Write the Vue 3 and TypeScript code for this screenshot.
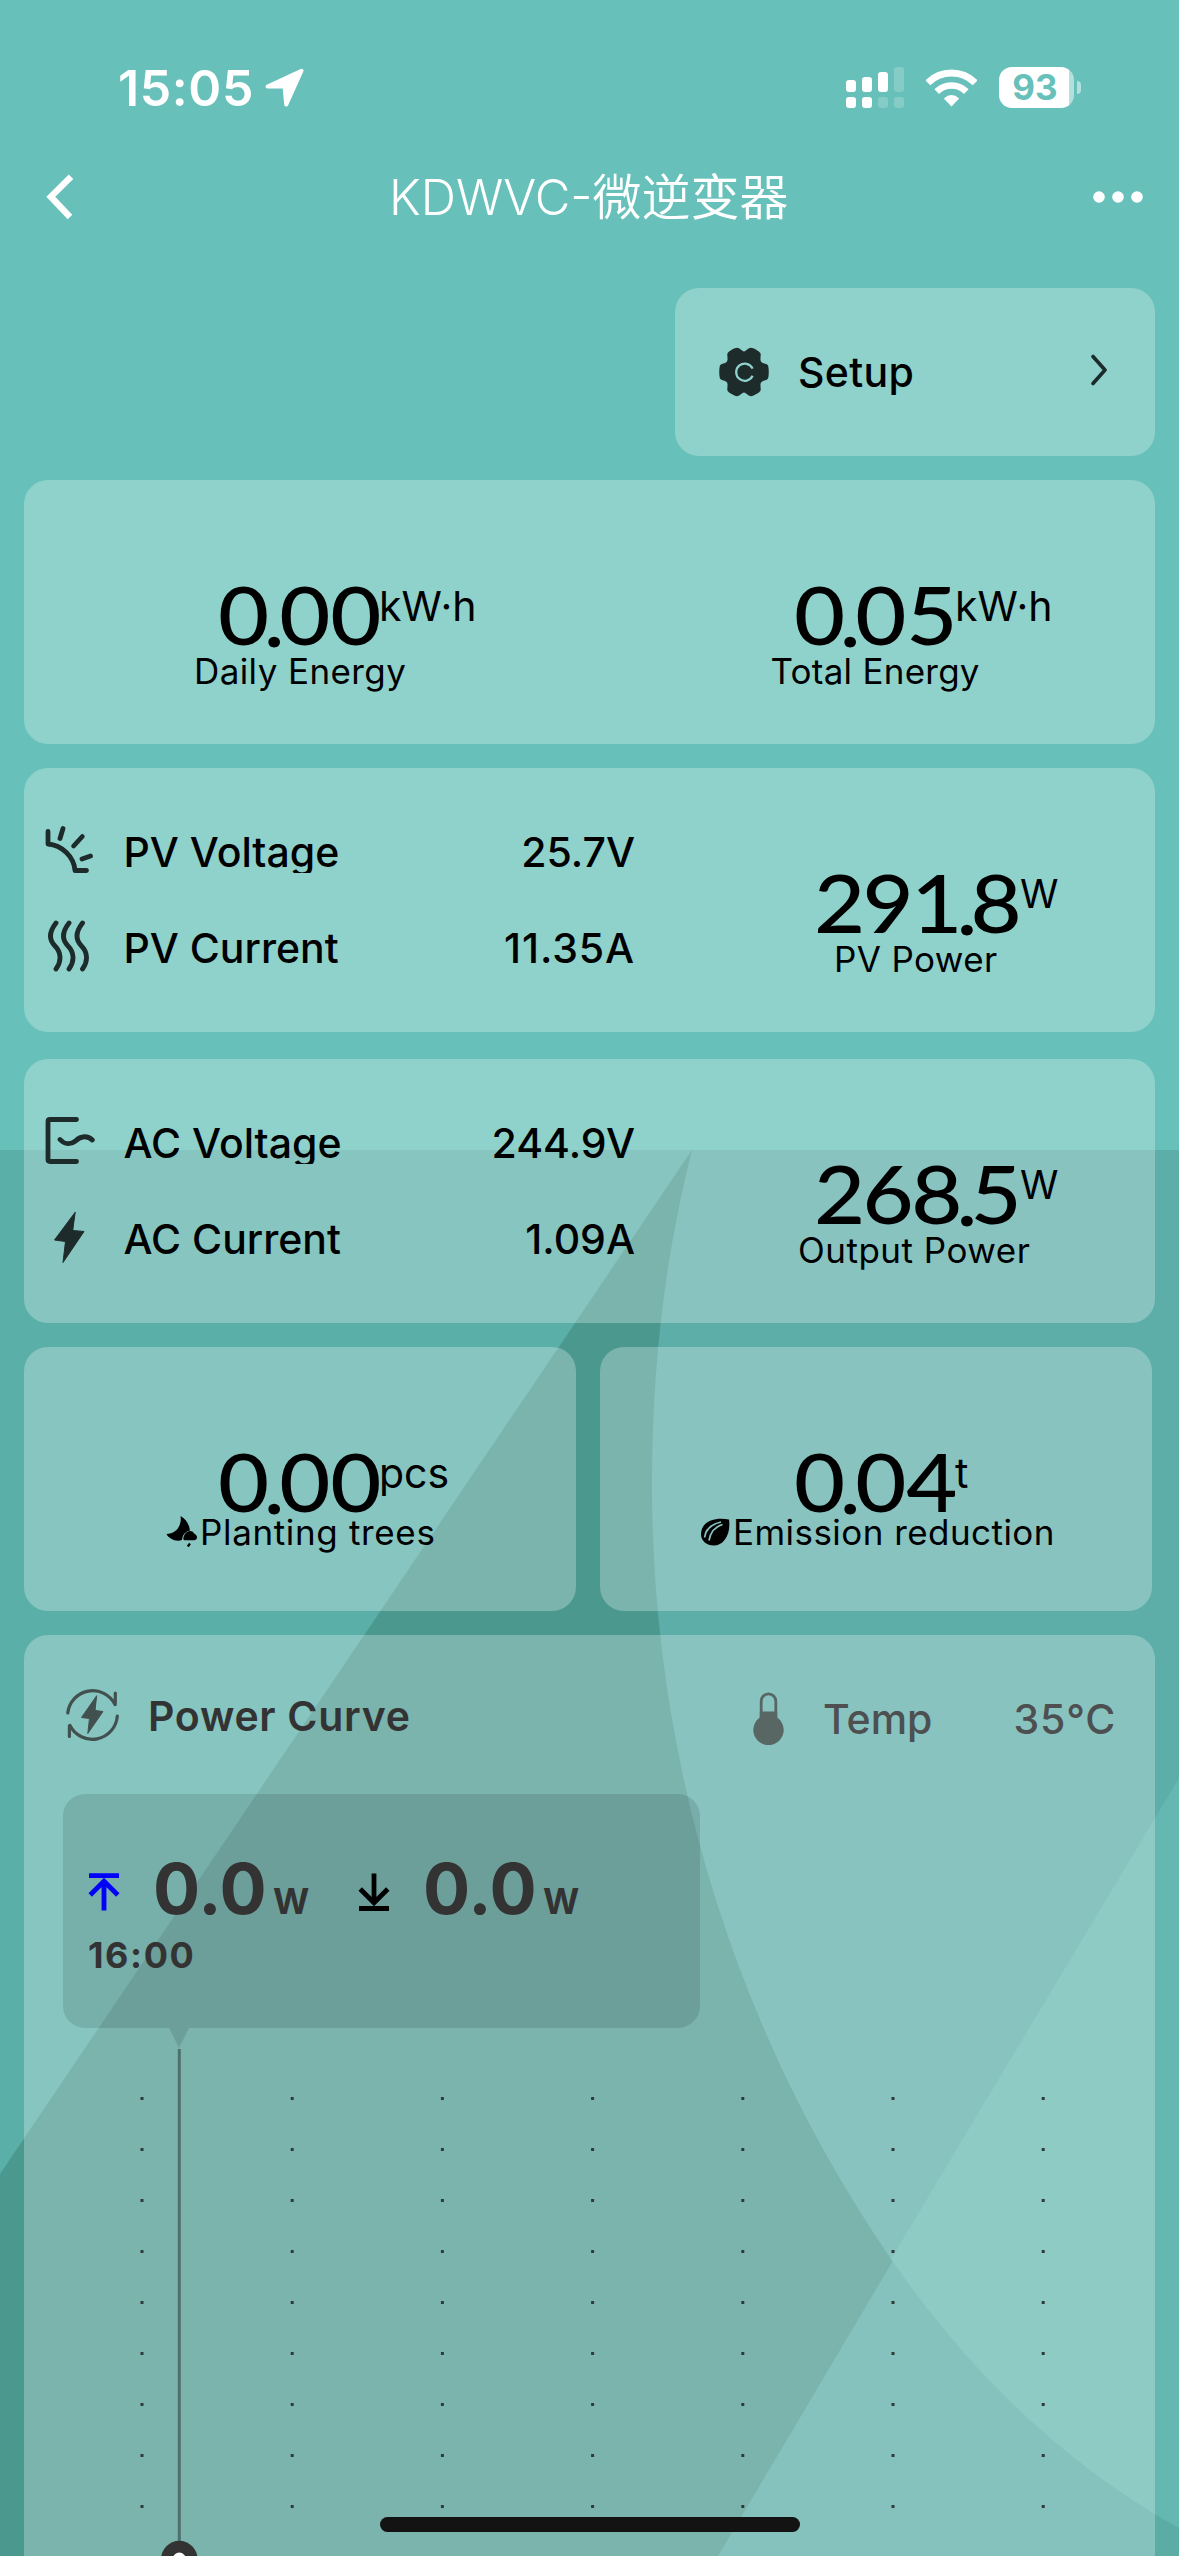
<script setup lang="ts">
interface Metric {
  id: string
  whole: string
  fraction: string
  unit: string
  label: string
}

interface Reading {
  icon: 'solar' | 'waves' | 'outlet' | 'bolt'
  label: string
  value: string
}

interface Channel {
  id: string
  readings: Reading[]
  power: Metric
}

const energy: Metric[] = [
  { id: 'daily', whole: '0', fraction: '00', unit: 'kW·h', label: 'Daily Energy' },
  { id: 'total', whole: '0', fraction: '05', unit: 'kW·h', label: 'Total Energy' },
]

const channels: Channel[] = [
  {
    id: 'pv',
    readings: [
      { icon: 'solar', label: 'PV Voltage', value: '25.7V' },
      { icon: 'waves', label: 'PV Current', value: '11.35A' },
    ],
    power: { id: 'pv-power', whole: '291', fraction: '8', unit: 'W', label: 'PV Power' },
  },
  {
    id: 'ac',
    readings: [
      { icon: 'outlet', label: 'AC Voltage', value: '244.9V' },
      { icon: 'bolt', label: 'AC Current', value: '1.09A' },
    ],
    power: { id: 'ac-power', whole: '268', fraction: '5', unit: 'W', label: 'Output Power' },
  },
]

const savings: Metric[] = [
  { id: 'trees', whole: '0', fraction: '00', unit: 'pcs', label: 'Planting trees' },
  { id: 'emission', whole: '0', fraction: '04', unit: 't', label: 'Emission reduction' },
]

// Grid points of the power chart
const gridPoints: { x: number; y: number }[] = []
for (let row = 0; row < 9; row++) {
  for (let col = 0; col < 7; col++) {
    gridPoints.push({ x: 116.5 + col * 150.2, y: 69 + row * 51 })
  }
}
</script>

<template>
  <div class="screen">
    <svg class="backdrop" viewBox="0 0 1179 2556" aria-hidden="true">
      <rect width="1179" height="2556" fill="#67c0b9" />
      <rect y="1150" width="1179" height="1406" fill="#5ab0a9" />
      <path d="M692 1150H1179V2556H0V2174Z" fill="#4b988f" />
      <path d="M1179 1778V2556H718Z" fill="#5aaca5" />
      <path
        d="M692 1150C664 1260 652 1370 652 1485C652 1765 737 2035 891 2259C968 2371 1065 2465 1179 2528V1150Z"
        fill="#5daea9"
      />
      <path d="M1179 1778V2528C1065 2465 968 2371 891 2259Z" fill="#65b8b1" />
    </svg>

    <header class="status">
      <span class="clock">15:05</span>
      <svg class="location" width="40" height="40" viewBox="0 0 40 40">
        <path d="M36.5 2.7L2.6 18.6H19.6L21.2 36.6Z" fill="#fff" stroke="#fff" stroke-width="4" stroke-linejoin="round" />
      </svg>
      <svg class="signal" width="58" height="42" viewBox="0 0 58 42" fill="#fff">
        <rect x="0" y="13" width="10" height="12" rx="3" />
        <rect x="16" y="10" width="10" height="15" rx="3" />
        <rect x="32" y="5" width="10" height="20" rx="3" />
        <rect x="48" y="0" width="10" height="25" rx="3" opacity=".2" />
        <rect x="0" y="30" width="10" height="11" rx="3" />
        <rect x="16" y="30" width="10" height="11" rx="3" />
        <rect x="32" y="30" width="10" height="11" rx="3" opacity=".2" />
        <rect x="48" y="30" width="10" height="11" rx="3" opacity=".2" />
      </svg>
      <svg class="wifi" width="51" height="38" viewBox="0 0 51 38" fill="none" stroke="#fff">
        <path d="M1.8 13.8A33.5 33.5 0 0 1 49.2 13.8" stroke-width="7" />
        <path d="M10.7 22.6A21 21 0 0 1 40.3 22.6" stroke-width="6.6" />
        <path d="M25.5 37.5L17.8 29.4Q25.5 22.6 33.2 29.4Z" fill="#fff" stroke="none" />
      </svg>
      <div class="battery"><span>93</span></div>
      <i class="battery-cap"></i>
    </header>

    <nav class="nav">
      <svg class="back" width="30" height="46" viewBox="0 0 30 46">
        <path d="M25 2.7L4.8 22.8L24 43" fill="none" stroke="#fff" stroke-width="6.4" />
      </svg>
      <h1 class="title">KDWVC-微逆<span class="title-heavy">变</span>器</h1>
      <svg class="more" width="50" height="14" viewBox="0 0 50 14" fill="#fff">
        <circle cx="6" cy="7" r="5.8" />
        <circle cx="25" cy="7" r="5.8" />
        <circle cx="44" cy="7" r="5.8" />
      </svg>
    </nav>

    <section class="card setup">
      <svg width="50" height="50" viewBox="-25 -25 50 50">
        <path
          d="M0 -20.5C-2 -20.5 -4 -24.2 -7 -24.2C-9 -24.2 -15 -21 -16.3 -19C-17.5 -17 -15.5 -13 -17 -10.5C-18.5 -8 -22.5 -9 -24 -6.5C-25 -4 -25 4 -24 6.5C-22.5 9 -18.5 8 -17 10.5C-15.5 13 -17.5 17 -16.3 19C-15 21 -9 24.2 -7 24.2C-4 24.2 -2 20.5 0 20.5C2 20.5 4 24.2 7 24.2C9 24.2 15 21 16.3 19C17.5 17 15.5 13 17 10.5C18.5 8 22.5 9 24 6.5C25 4 25 -4 24 -6.5C22.5 -9 18.5 -8 17 -10.5C15.5 -13 17.5 -17 16.3 -19C15 -21 9 -24.2 7 -24.2C4 -24.2 2 -20.5 0 -20.5Z"
          fill="#1e2b2b"
        />
        <path d="M8.6 -3.4A8.6 8.6 0 1 0 8.6 3.8" fill="none" stroke="#90d3ce" stroke-width="2.2" />
      </svg>
      <span class="setup-label">Setup</span>
      <svg class="setup-go" width="18" height="32" viewBox="0 0 18 32">
        <path d="M3 2.5L15 16L3 29.5" fill="none" stroke="#1e2b2b" stroke-width="3.6" stroke-linecap="round" stroke-linejoin="round" />
      </svg>
    </section>

    <section class="card row">
      <div v-for="m in energy" :key="m.id" class="metric half" :class="m.id">
        <div class="value">
          <span class="num"><span class="digits">{{ m.whole }}<span class="point">.</span>{{ m.fraction }}</span></span>
          <span class="unit">{{ m.unit }}</span>
        </div>
        <div class="label">{{ m.label }}</div>
      </div>
    </section>

    <section v-for="ch in channels" :key="ch.id" class="card row" :class="ch.id">
      <div class="readings">
        <div v-for="r in ch.readings" :key="r.label" class="reading">
          <svg width="50" height="52" viewBox="0 0 50 52" fill="none" stroke="#1e2b2b" stroke-width="4.8" stroke-linecap="round" stroke-linejoin="round">
            <path v-if="r.icon === 'solar'" d="M3 7.5V20C17 21 29 33 30 46.500H41.500M18 4.500L15 14.500M37.300 12.500L28.600 22M45.500 32L37 35" />
            <path v-else-if="r.icon === 'waves'" d="M11 3C4 12 4 20 10 26C16 32 17 41 11 49M24 3C17 12 17 20 23 26C29 32 30 41 24 49M37.500 3C30.500 12 30.500 20 36.500 26C42.500 32 43.500 41 37.500 49" />
            <path v-else-if="r.icon === 'outlet'" d="M31.500 4.500H5Q3 4.500 3 6.500V44.500Q3 46.500 5 46.500H31.500M15 24.500C20 30 26 29.500 30.500 26C36 20.500 43 20.500 47.300 25" />
            <path v-else d="M30 1.500L9.500 29L20.500 30.500L18 51.500L39 20.500L28 19.500Z" fill="#1e2b2b" stroke-width="1" />
          </svg>
          <span class="reading-label">{{ r.label }}</span>
          <span class="reading-value">{{ r.value }}</span>
        </div>
      </div>
      <div class="metric" :class="ch.power.id">
        <div class="value wide">
          <span class="num"><span class="digits">{{ ch.power.whole }}<span class="point">.</span>{{ ch.power.fraction }}</span></span>
          <span class="unit watt">{{ ch.power.unit }}</span>
        </div>
        <div class="label">{{ ch.power.label }}</div>
      </div>
    </section>

    <div class="pair">
      <section v-for="m in savings" :key="m.id" class="card metric" :class="m.id">
        <div class="value">
          <span class="num"><span class="digits">{{ m.whole }}<span class="point">.</span>{{ m.fraction }}</span></span>
          <span class="unit">{{ m.unit }}</span>
        </div>
        <div class="label tight">
          <svg v-if="m.id === 'trees'" width="34" height="32" viewBox="0 0 34 32">
            <path d="M14.600 0C20 3 23 8 24 14.500C19 15.500 16.500 19 16 24C10 26 3 23 .5 18C9 18 16 11 14.600 0Z" />
            <path d="M17.300 22.800C18 15.500 25.500 12.500 28 17.500C32 19 32 24 28 24.200H18.500Q17.300 24.200 17.300 22.800Z" />
            <path d="M24 27.500L21.800 30.500" stroke="#000" stroke-width="2.200" />
          </svg>
          <svg v-else width="32" height="30" viewBox="0 0 32 30">
            <path d="M28 2.500C14 0 0 4 0 17.500C0 24 6 28.500 12.500 28.500C23 28.500 30 17 28 2.500Z" />
            <path d="M3.600 20.500C4.500 12.500 11 7 20 5M8 23.500C9.500 15 14.500 9.500 21.500 7.500" fill="none" stroke="#88c5c2" stroke-width="1.700" />
          </svg>
          <span>{{ m.label }}</span>
        </div>
      </section>
    </div>

    <section class="card curve">
      <div class="curve-head">
        <svg width="54" height="54" viewBox="0 0 54 54" fill="none" stroke="#42504f" stroke-width="3.200" stroke-linecap="round" stroke-linejoin="round">
          <path d="M1.800 25A25 25 0 0 1 49 16.500M49.300 5V16.500M51.300 28A25 25 0 0 1 4 37.500M3.400 48.500V37.500" />
          <path d="M30.500 8L15.500 29.500L23.500 30.500L21.800 45.500L37 23.500L29.300 22.500Z" fill="#42504f" stroke-width="1" />
        </svg>
        <h2>Power Curve</h2>
        <div class="temp">
          <svg width="31" height="54" viewBox="0 0 31 54">
            <path d="M8.200 27V10.200A7.300 7.300 0 0 1 22.800 10.200V27" fill="none" stroke="#586664" stroke-width="2.800" />
            <path d="M6.800 20.500H24.200V26.500A15.200 15.200 0 1 1 6.800 26.500Z" fill="#586664" />
          </svg>
          <span class="temp-label">Temp</span>
          <span class="temp-value">35°C</span>
        </div>
      </div>

      <div class="tooltip">
        <div class="flow">
          <svg width="32" height="38" viewBox="0 0 32 38" fill="none" stroke="#0202fb" stroke-width="4.800">
            <path d="M1 2.600H31M16 37.500V9M2.200 22L16 8.200L29.800 22" />
          </svg>
          <span class="flow-value">0.0</span>
          <span class="flow-unit">W</span>
          <svg width="32" height="38" viewBox="0 0 32 38" fill="none" stroke="#000" stroke-width="4.800">
            <path d="M1 35.500H31M16 .5V29M2.200 16L16 29.800L29.800 16" />
          </svg>
          <span class="flow-value">0.0</span>
          <span class="flow-unit">W</span>
        </div>
        <div class="time">16:00</div>
        <i class="tip"></i>
      </div>

      <svg class="chart" width="1131" height="528" viewBox="0 0 1131 528">
        <rect v-for="(p, i) in gridPoints" :key="i" :x="p.x" :y="p.y" width="3" height="3" fill="#2f3a39" />
        <rect x="153.800" y="21" width="3" height="495" fill="#4e716d" />
        <circle cx="155.300" cy="531" r="18.200" fill="#333" />
        <circle cx="155.300" cy="531" r="6.500" fill="#fff" />
      </svg>
    </section>

    <div class="home-indicator"></div>
  </div>
</template>

<style>
body {
  background: #67c0b9;
}
</style>

<style scoped>
.screen {
  position: relative;
  width: 1179px;
  height: 2556px;
  overflow: hidden;
  color: #000;
  font-family: Inter, "Noto Sans CJK SC", sans-serif;
}

svg {
  display: block;
  flex: none;
}

.backdrop {
  position: absolute;
  inset: 0;
  width: 1179px;
  height: 2556px;
}

.status,
.nav,
.card,
.pair {
  position: relative;
  box-sizing: border-box;
}

.status {
  display: flex;
  align-items: center;
  height: 134px;
  padding: 41px 98px 0 118px;
}

.clock {
  width: 147px;
  color: #fff;
  font-size: 50px;
  font-weight: 600;
  letter-spacing: 0.6px;
  white-space: nowrap;
}

.signal {
  margin-left: auto;
}

.wifi {
  margin-left: 22px;
}

.battery {
  box-sizing: border-box;
  width: 75px;
  height: 41px;
  margin-left: 22px;
  padding-right: 3px;
  border-radius: 13px;
  background: linear-gradient(90deg, #fff 70px, rgba(255, 255, 255, 0.5) 70px);
  color: #67c0b9;
  font-size: 35px;
  font-weight: 700;
  line-height: 41px;
  text-align: center;
}

.battery-cap {
  width: 4px;
  height: 13px;
  margin-left: 3px;
  border-radius: 0 5px 5px 0;
  background: rgba(255, 255, 255, 0.5);
}

.nav {
  display: flex;
  align-items: center;
  height: 126px;
  padding: 0 36px 0 46px;
}

.title {
  margin: 2px 0 0 313px;
  color: #fff;
  font-size: 49px;
  font-weight: 350;
  line-height: 60px;
  white-space: nowrap;
}

.title-heavy {
  font-weight: 400;
}

.more {
  margin-left: auto;
}

.card {
  height: 264px;
  margin: 24px 24px 0;
  border-radius: 24px;
  background: rgba(255, 255, 255, 0.265);
}

.setup {
  display: flex;
  align-items: center;
  width: 480px;
  height: 168px;
  margin: 28px 24px 0 675px;
  padding: 0 47px 0 44px;
}

.setup-label {
  margin-left: 29px;
  font-size: 41px;
  font-weight: 500;
  letter-spacing: 0.3px;
}

.setup-go {
  margin: -4px 0 0 auto;
}

.row {
  display: flex;
}

.ac {
  margin-top: 27px;
}

.metric {
  padding-top: 102px;
}

.half {
  width: 565.5px;
}

.value {
  display: flex;
  height: 60px;
}

.num {
  width: 161px;
}

.wide .num {
  width: 206px;
}

.digits {
  display: inline-block;
  margin-top: 2px;
  font-family: Lato, Inter, sans-serif;
  font-size: 81px;
  font-weight: 500;
  line-height: 60px;
  white-space: nowrap;
  transform: scaleX(1.09);
  transform-origin: 0 50%;
}

.wide .digits {
  letter-spacing: -2.4px;
}

.point {
  position: relative;
  top: 2px;
  margin: 0 -5px;
}

.wide .point {
  margin: 0 -4px 0 -3px;
}

.unit {
  margin-top: -1px;
  font-size: 41px;
  line-height: 50px;
}

.watt {
  font-size: 39px;
}

.label {
  margin-top: 8px;
  font-size: 35px;
  letter-spacing: 0.4px;
  line-height: 42px;
  white-space: nowrap;
}

.tight {
  display: flex;
  align-items: center;
  margin-top: 2px;
}

.daily .value,
.trees .value,
.emission .value {
  margin-left: 194px;
}

.daily .label {
  margin-left: 170px;
}

.total .value {
  margin-left: 204.5px;
}

.total .label {
  margin-left: 181px;
  letter-spacing: 0.25px;
}

.trees .label {
  margin-left: 142px;
  letter-spacing: 0.65px;
}

.emission .label {
  margin-left: 101px;
  letter-spacing: 0.45px;
}

.metric .value.wide {
  margin-left: 179px;
}

.pv-power .label {
  margin-left: 199px;
}

.ac-power .label {
  margin-left: 163px;
  letter-spacing: 0.5px;
}

.readings {
  width: 590px;
  padding: 36px 0 0 21px;
}

.reading {
  display: flex;
  align-items: center;
  height: 96px;
  font-size: 41px;
  font-weight: 500;
  line-height: 42px;
  white-space: nowrap;
}

.reading svg {
  margin-top: -4px;
}

.reading-label {
  height: 42px;
  margin-left: 28.5px;
  overflow: hidden;
}

.reading-value {
  margin-left: auto;
}

.pv .reading:last-child .reading-value {
  letter-spacing: 0.9px;
}

.pair {
  display: flex;
  margin-top: 24px;
}

.pair .card {
  width: 552px;
  margin: 0 0 0 24px;
}

.curve {
  height: 960px;
  color: #333;
}

.curve-head {
  display: flex;
  align-items: center;
  height: 159px;
  padding: 0 39px 0 42px;
}

h2 {
  margin: 3px 0 0 28px;
  font-size: 41px;
  font-weight: 600;
  letter-spacing: 0.7px;
  white-space: nowrap;
}

.temp {
  display: flex;
  align-items: center;
  width: 363px;
  margin-left: auto;
  color: #4d4f50;
  font-size: 41px;
  font-weight: 500;
}

.temp span {
  margin-top: 9px;
}

.temp svg {
  margin-top: 6px;
}

.temp .temp-label {
  margin-left: 39px;
}

.temp .temp-value {
  margin-left: auto;
  letter-spacing: 0.8px;
}

.tooltip {
  position: relative;
  box-sizing: border-box;
  width: 637px;
  height: 234px;
  margin-left: 39px;
  padding: 65px 0 0 25px;
  border-radius: 22px;
  background: rgba(0, 0, 0, 0.11);
}

.flow {
  display: flex;
  align-items: baseline;
  height: 60px;
}

.flow svg {
  align-self: center;
  margin-top: 6px;
}

.flow-value {
  width: 120px;
  margin-left: 33px;
  font-size: 70px;
  font-weight: 700;
  line-height: 60px;
}

.flow-unit {
  width: 85px;
  font-size: 35px;
  font-weight: 700;
}

.time {
  margin: 16px 0 0;
  font-size: 36px;
  font-weight: 700;
  letter-spacing: 1.6px;
  line-height: 40px;
}

.tip {
  position: absolute;
  top: 234px;
  left: 106px;
  border: 10px solid transparent;
  border-top: 20px solid rgba(0, 0, 0, 0.11);
  border-bottom: 0;
}

.home-indicator {
  position: absolute;
  left: 380px;
  bottom: 24px;
  width: 420px;
  height: 15px;
  border-radius: 8px;
  background: #131313;
}
</style>
